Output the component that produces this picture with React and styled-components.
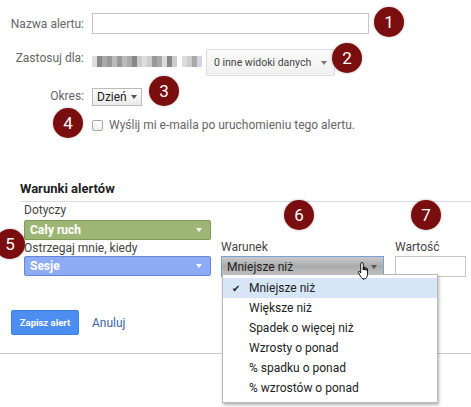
import React from "react";
import styled, { createGlobalStyle } from "styled-components";

const G = createGlobalStyle`
  body { margin:0; background:#fff; font-family: Roboto, "Liberation Sans", sans-serif; color:#333; }
`;
const Page = styled.div`position:relative; width:471px; height:407px; overflow:hidden;`;
const Top = styled.div`display:grid; grid-template-columns:84px 1fr; column-gap:8px; row-gap:0; padding-top:13px;`;
const Label = styled.div`text-align:right; font-size:12px; color:#666; padding-top:${p=>p.pt||0}px; height:${p=>p.h}px;`;
const Cell = styled.div`height:${p=>p.h}px; display:flex; align-items:flex-start; gap:4px;`;
const TextInput = styled.div`width:${p=>p.w}px; height:${p=>p.hh}px; border:1px solid #c6c6c6; box-sizing:border-box; background:#fff;`;
const Blur = styled.div`display:flex; margin-top:7px; height:11px;`;
const Px = styled.div`width:5px; height:11px; background:${p=>p.c};`;
const GreyBtn = styled.div`height:27px; box-sizing:border-box; border:1px solid #ddd; border-radius:2px; background:linear-gradient(#fafafa,#f1f1f1); font-size:10.5px; color:#444; display:flex; align-items:center; padding:0 7px; gap:10px;`;
const Caret = styled.span`width:0;height:0;border-left:3.5px solid transparent;border-right:3.5px solid transparent;border-top:4px solid ${p=>p.c||"#777"};`;
const Period = styled.div`margin-top:-1px; height:18px; padding:0 4px; border:1px solid #bbb; box-sizing:border-box; background:linear-gradient(#fff,#e9e9e9); font-size:12px; color:#222; display:flex; align-items:center; gap:4px;`;
const Check = styled.label`display:flex; align-items:center; gap:6px; font-size:12px; color:#666; margin-top:-2px;`;
const Box = styled.span`width:9px;height:9px;border:1px solid #aaa;border-radius:2px;background:linear-gradient(#fff,#eee);`;
const Section = styled.div`margin:49px 0 0 20px;`;
const H = styled.div`font-weight:bold; font-size:13px; color:#222; padding-bottom:5px; border-bottom:1px solid #ddd;`;
const Cols = styled.div`display:flex; padding:3px 0 0 24px;`;
const Col = styled.div`display:flex; flex-direction:column; width:${p=>p.w}px;`;
const Small = styled.div`font-size:12px; color:#444; height:${p=>p.h||10}px; line-height:${p=>p.lh||12}px;`;
const Sel = styled.div`width:187px; height:20px; box-sizing:border-box; border:1px solid ${p=>p.b}; border-radius:2px; background:${p=>p.bg}; color:#fff; font-weight:bold; font-size:12px; display:flex; align-items:center; justify-content:space-between; padding:0 8px 0 5px;`;
const Cond = styled.div`width:163px; height:21px; box-sizing:border-box; border:1px solid #7aa0d8; background:linear-gradient(#c9c9c9,#aaa 50%,#c4c4c4); font-size:12px; color:#222; display:flex; align-items:center; justify-content:space-between; padding:0 6px 0 5px;`;
const Actions = styled.div`display:flex; align-items:center; gap:13px; margin:33px 0 0 11px;`;
const Primary = styled.div`width:68px; height:25px; border-radius:2px; background:#4d8ef2; border:1px solid #3b7de0; box-sizing:border-box; color:#fff; font-size:9.5px; font-weight:bold; display:flex; align-items:center; justify-content:center;`;
const Link = styled.span`font-size:12px; color:#3a63b0;`;
const Rule = styled.div`border-top:1px solid #ccc; margin-top:18px;`;
const Badge = styled.div`position:absolute; left:${p=>p.x-15}px; top:${p=>p.y-15}px; width:30px; height:30px; border-radius:50%; background:#7a0d0d; color:#fff; font-size:17px; display:flex; align-items:center; justify-content:center; box-shadow:0 0 3px rgba(0,0,0,.3);`;
const Menu = styled.div`position:absolute; left:222px; top:274px; width:216px; padding:3px 0 4px; background:#fff; border:1px solid #bbb; box-shadow:1px 2px 3px rgba(0,0,0,.3); box-sizing:border-box;`;
const Item = styled.div`height:20px; display:flex; align-items:center; padding-left:26px; position:relative; font-size:12px; color:#222; background:${p=>p.on?"#d6e6f6":"transparent"};`;
const Tick = styled.span`position:absolute; left:9px; font-size:10px;`;
const Hand = styled.div`position:absolute; left:357px; top:261px;`;

const blur = ["#ddd","#888","#aaa","#999","#bbb","#999","#bbb","#aaa","#888","#ccc","#ddd","#ccc","#999","#aaa","#ddd","#888","#ccc","#fff","#ddd","#ccc","#aaa","#dcd0e8"];

export default function App(){
  return (<Page><G/>
    <Top>
      <Label h={32} pt={4}>Nazwa alertu:</Label>
      <Cell h={32}><TextInput w={277} hh={21}/></Cell>
      <Label h={38} pt={2}>Zastosuj dla:</Label>
      <Cell h={38}><Blur>{blur.map((c,i)=><Px key={i} c={c}/>)}</Blur><GreyBtn>0 inne widoki danych<Caret/></GreyBtn></Cell>
      <Label h={31} pt={0}>Okres:</Label>
      <Cell h={31}><Period>Dzień<Caret c="#555"/></Period></Cell>
      <div/>
      <Cell h={12}><Check><Box/>Wyślij mi e-maila po uruchomieniu tego alertu.</Check></Cell>
    </Top>
    <Section>
      <H>Warunki alertów</H>
    </Section>
    <Cols>
      <Col w={197}>
        <Small h={10} lh={11}>Dotyczy</Small>
        <Small h={5}/>
        <Sel bg="#9db675" b="#7f9a55">Cały ruch<Caret c="#fff"/></Sel>
        <Small h={16} lh={16}>Ostrzegaj mnie, kiedy</Small>
        <Sel bg="#8eabf6" b="#6685d8">Sesje<Caret c="#fff"/></Sel>
      </Col>
      <Col w={174}>
        <Small h={35}/>
        <Small h={16} lh={14}>Warunek</Small>
        <Cond>Mniejsze niż<Caret c="#555"/></Cond>
      </Col>
      <Col w={72}>
        <Small h={35}/>
        <Small h={16} lh={14}>Wartość</Small>
        <TextInput w={71} hh={21}/>
      </Col>
    </Cols>
    <Actions><Primary>Zapisz alert</Primary><Link>Anuluj</Link></Actions>
    <Rule/>
    <Menu>
      <Item on><Tick>✔</Tick>Mniejsze niż</Item>
      <Item>Większe niż</Item>
      <Item>Spadek o więcej niż</Item>
      <Item>Wzrosty o ponad</Item>
      <Item>% spadku o ponad</Item>
      <Item>% wzrostów o ponad</Item>
    </Menu>
    <Hand><svg width="16" height="20" viewBox="0 0 16 20"><path d="M5 1.5c.8 0 1.3.5 1.3 1.3V9V6.5c0-.8 1.4-.8 1.4 0V9V7.2c0-.8 1.4-.8 1.4 0V9.5V8c0-.8 1.4-.8 1.4 0v5.5c0 2.5-1.5 4.5-4 4.5H7c-1.5 0-2.5-1-3.3-2.3L1.4 11.5c-.5-.9.6-1.6 1.3-.9L3.7 12V2.8c0-.8.5-1.3 1.3-1.3z" fill="#fff" stroke="#000" strokeWidth="0.9"/></svg></Hand>
    <Badge x={389} y={22}>1</Badge>
    <Badge x={347} y={58}>2</Badge>
    <Badge x={164} y={91}>3</Badge>
    <Badge x={68} y={123}>4</Badge>
    <Badge x={10} y={244}>5</Badge>
    <Badge x={299} y={215}>6</Badge>
    <Badge x={426} y={215}>7</Badge>
  </Page>);
}
